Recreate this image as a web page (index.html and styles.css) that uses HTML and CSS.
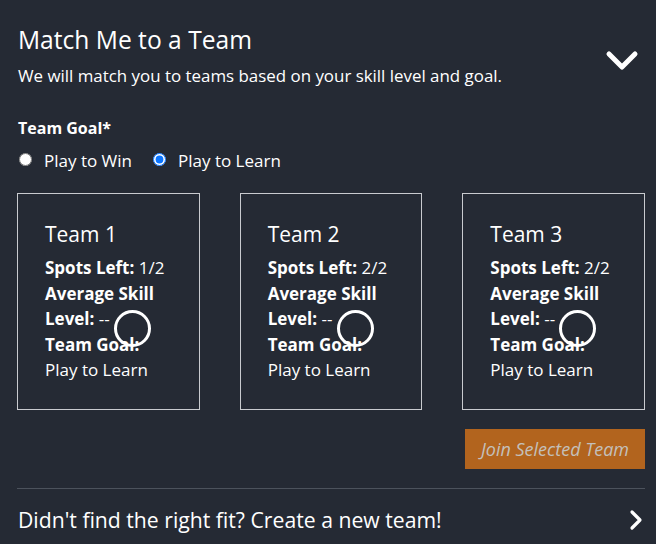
FILE: index.html
```html
<!DOCTYPE html>
<html>
<head>
<meta charset="utf-8">
<link rel="stylesheet" href="styles.css">
</head>
<body>
<div class="panel">
  <div class="header">
    <div class="header-text">
      <h1 class="title">Match Me to a Team</h1>
      <p class="subtitle">We will match you to teams based on your skill level and goal.</p>
    </div>
    <svg class="chev-down" width="34" height="22" viewBox="0 0 34 22"><polyline points="4,4 17,17 30,4" fill="none" stroke="#fff" stroke-width="5" stroke-linecap="round" stroke-linejoin="round"/></svg>
  </div>

  <div class="goal-label">Team Goal*</div>
  <div class="radios">
    <label class="radio"><input type="radio" name="goal"> Play to Win</label>
    <label class="radio"><input type="radio" name="goal" checked> Play to Learn</label>
  </div>

  <div class="cards">
    <div class="card">
      <div class="card-title">Team 1</div>
      <div class="card-body">
        <b>Spots Left:</b> 1/2<br>
        <b>Average Skill Level:</b> --<br>
        <b>Team Goal:</b><br>
        Play to Learn
      </div>
      <span class="spinner"></span>
    </div>
    <div class="card">
      <div class="card-title">Team 2</div>
      <div class="card-body">
        <b>Spots Left:</b> 2/2<br>
        <b>Average Skill Level:</b> --<br>
        <b>Team Goal:</b><br>
        Play to Learn
      </div>
      <span class="spinner"></span>
    </div>
    <div class="card">
      <div class="card-title">Team 3</div>
      <div class="card-body">
        <b>Spots Left:</b> 2/2<br>
        <b>Average Skill Level:</b> --<br>
        <b>Team Goal:</b><br>
        Play to Learn
      </div>
      <span class="spinner"></span>
    </div>
  </div>

  <div class="actions">
    <button class="join" disabled>Join Selected Team</button>
  </div>

  <div class="divider"></div>

  <div class="create">
    <span>Didn't find the right fit? Create a new team!</span>
    <svg class="chev-right" width="14" height="22" viewBox="0 0 14 22"><polyline points="3,3 11,11 3,19" fill="none" stroke="#fff" stroke-width="3.2" stroke-linecap="round" stroke-linejoin="round"/></svg>
  </div>
</div>
</body>
</html>
```

FILE: styles.css
```css
html, body {
  margin: 0;
  padding: 0;
  background: #252a34;
}
body {
  font-family: "Open Sans", "Noto Sans", sans-serif;
  font-weight: 500;
  color: #ffffff;
  width: 656px;
  height: 544px;
  overflow: hidden;
}
.panel {
  padding: 25px 11px 0 17px;
}
.header {
  display: flex;
  align-items: center;
  justify-content: space-between;
}
.header-text {
  padding-left: 1px;
}
.title {
  margin: 0;
  font-size: 24.6px;
  line-height: 30px;
  font-weight: 500;
}
.subtitle {
  margin: 10px 0 0;
  font-size: 16.9px;
  line-height: 22px;
}
.chev-down {
  margin-right: 6px;
  margin-top: 9px;
}
.goal-label {
  margin-top: 31px;
  padding-left: 1px;
  font-size: 16px;
  line-height: 20px;
  font-weight: 700;
}
.radios {
  margin-top: 12px;
  display: flex;
  gap: 19px;
  font-size: 17px;
  line-height: 22px;
}
.radio {
  display: flex;
  align-items: center;
  gap: 12px;
}
.radio input {
  margin: 0 0 0 2px;
  width: 13px;
  height: 13px;
  accent-color: #0a74ff;
  position: relative;
  top: -2px;
}
.cards {
  margin-top: 21px;
  display: flex;
  gap: 40px;
}
.card {
  position: relative;
  width: 183px;
  height: 217px;
  box-sizing: border-box;
  border: 1px solid #c9cbcf;
  padding: 27px 20px 0 27px;
}
.card-title {
  font-size: 21px;
  line-height: 27px;
}
.card-body {
  margin-top: 7px;
  font-size: 17px;
  line-height: 25.5px;
}
.card-body b {
  font-weight: 700;
}
.spinner {
  position: absolute;
  left: 96px;
  top: 116px;
  width: 31px;
  height: 31px;
  border: 3px solid #fff;
  border-radius: 50%;
}
.actions {
  margin-top: 19px;
  display: flex;
  justify-content: flex-end;
}
.join {
  width: 180px;
  height: 40px;
  background: #b2641e;
  border: none;
  border-radius: 0;
  color: #c4c0bb;
  font-family: inherit;
  font-style: italic;
  font-weight: 500;
  font-size: 18px;
  padding: 0;
}
.divider {
  margin-top: 19px;
  height: 1px;
  background: #4c525c;
}
.create {
  margin-top: 17px;
  display: flex;
  align-items: center;
  justify-content: space-between;
  font-size: 21.2px;
  line-height: 27px;
  padding-left: 1px;
}
.chev-right {
  margin-right: 2px;
}
```
